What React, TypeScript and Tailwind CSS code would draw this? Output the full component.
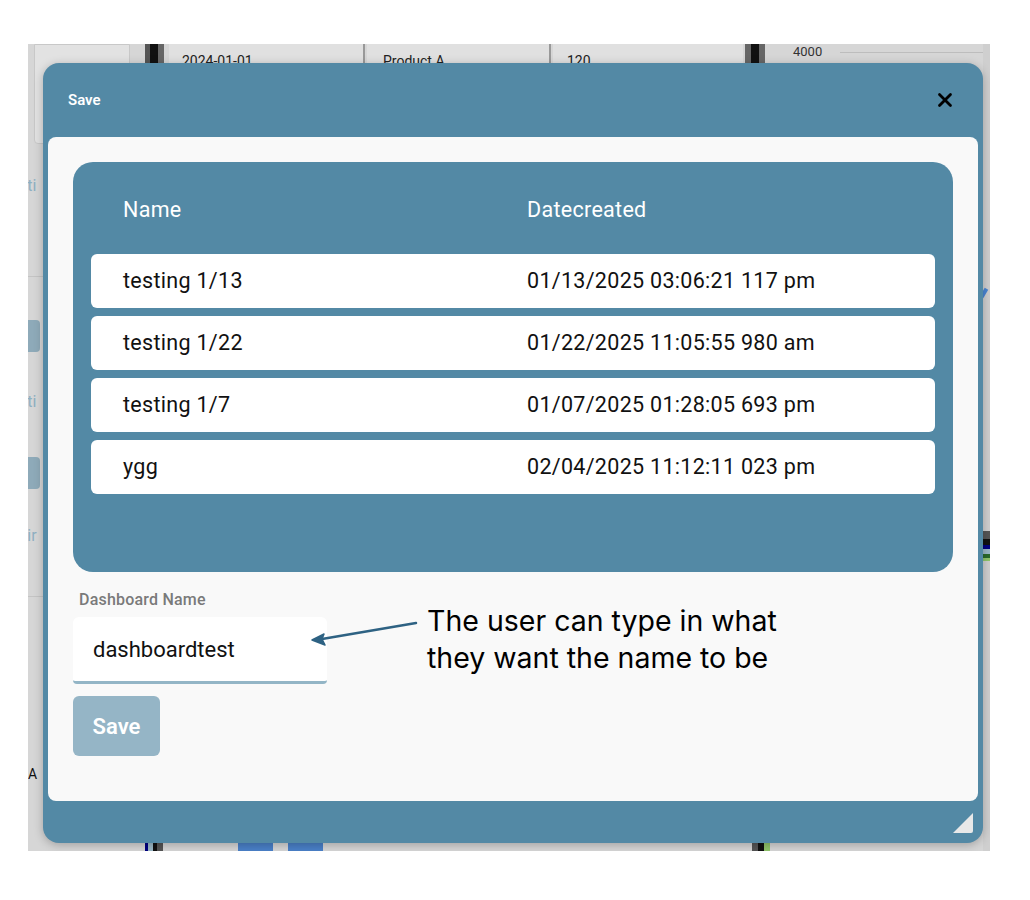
import { X } from 'lucide-react'

const rows = [
  { name: 'testing 1/13', date: '01/13/2025 03:06:21 117 pm' },
  { name: 'testing 1/22', date: '01/22/2025 11:05:55 980 am' },
  { name: 'testing 1/7', date: '01/07/2025 01:28:05 693 pm' },
  { name: 'ygg', date: '02/04/2025 11:12:11 023 pm' },
]

function Backdrop() {
  return (
    <div className="absolute inset-0 bg-[#d6d6d6] text-[14px] text-[#222]">
      {/* top strip of the app behind */}
      <div className="absolute left-[6px] top-0 w-[96px] h-[100px] rounded-b-[4px] border border-[#c8c8c8] bg-[#e2e2e2]" />
      <div className="absolute left-[117px] top-0 h-[20px] w-[24px] flex">
        <div className="w-[5px] bg-[#555]" />
        <div className="w-[8px] bg-[#111]" />
        <div className="w-[6px] bg-[#666]" />
      </div>
      <div className="absolute left-[141px] top-0 w-[196px] h-[20px] bg-[#e0e0e0] border-r-2 border-[#999] pl-[13px] leading-[34px]">2024-01-01</div>
      <div className="absolute left-[339px] top-0 w-[184px] h-[20px] bg-[#e0e0e0] border-r-2 border-[#999] pl-[16px] leading-[34px]">Product A</div>
      <div className="absolute left-[525px] top-0 w-[190px] h-[20px] bg-[#e0e0e0] pl-[14px] leading-[34px]">120</div>
      <div className="absolute left-[717px] top-0 h-[20px] w-[26px] flex">
        <div className="w-[6px] bg-[#666]" />
        <div className="w-[8px] bg-[#111]" />
        <div className="w-[6px] bg-[#666]" />
      </div>
      <div className="absolute left-[765px] top-0 text-[13px] leading-[16px] text-[#333]">4000</div>
      <div className="absolute left-[812px] top-[8px] w-[150px] h-px bg-[#bdbdbd]" />

      {/* left edge */}
      <div className="absolute left-[-6px] top-[130px] text-[16px] text-[#8fb0c2]">tti</div>
      <div className="absolute left-[-6px] top-[276px] w-[18px] h-[32px] rounded-[4px] bg-[#8eaab9]" />
      <div className="absolute left-[-6px] top-[346px] text-[16px] text-[#8fb0c2]">tti</div>
      <div className="absolute left-[-6px] top-[413px] w-[18px] h-[32px] rounded-[4px] bg-[#8eaab9]" />
      <div className="absolute left-[-6px] top-[480px] text-[16px] text-[#8fb0c2]">tir</div>
      <div className="absolute left-0 top-[720px] text-[14px] text-[#111]">A</div>
      <div className="absolute left-0 top-[232px] w-[15px] h-px bg-[#c4c4c4]" />
      <div className="absolute left-0 top-[552px] w-[15px] h-px bg-[#c4c4c4]" />

      {/* right edge */}
      <div className="absolute right-0 top-0 w-[7px] h-full bg-[#cfcfcf]" />
      <div className="absolute right-[4px] top-[244px] w-[4px] h-[10px] bg-[#4a86d4] rotate-[30deg]" />
      <div className="absolute right-0 top-[487px] w-[7px] h-[30px] flex flex-col">
        <div className="h-[8px] bg-[#555]" />
        <div className="h-[6px] bg-[#111]" />
        <div className="h-[4px] bg-[#000080]" />
        <div className="h-[5px] bg-[#9bb8c6]" />
        <div className="h-[4px] bg-[#2a6a2a]" />
        <div className="h-[3px] bg-[#8fc46a]" />
      </div>

      {/* bottom strip */}
      <div className="absolute left-[117px] bottom-0 h-[8px] w-[24px] flex">
        <div className="w-[3px] bg-[#000080]" />
        <div className="w-[5px] bg-[#9bb8c6]" />
        <div className="w-[4px] bg-[#111]" />
        <div className="w-[6px] bg-[#555]" />
      </div>
      <div className="absolute left-[210px] bottom-0 h-[8px] w-[35px] bg-[#4a80c8]" />
      <div className="absolute left-[260px] bottom-0 h-[8px] w-[35px] bg-[#4a80c8]" />
      <div className="absolute left-[724px] bottom-0 h-[8px] w-[24px] flex">
        <div className="w-[6px] bg-[#555]" />
        <div className="w-[6px] bg-[#111]" />
        <div className="w-[6px] bg-[#8fc46a]" />
      </div>
    </div>
  )
}

export default function App() {
  return (
    <div className="w-[1030px] h-[900px] bg-white pt-[44px] pl-[28px]" style={{ fontFamily: 'Roboto, "Liberation Sans", sans-serif' }}>
      <div className="relative w-[962px] h-[807px] overflow-hidden">
        <Backdrop />

        {/* modal */}
        <div className="absolute left-[15px] top-[19px] w-[940px] h-[780px] rounded-[16px] bg-[#5389a5] shadow-[0_2px_10px_rgba(0,0,0,0.25)] flex flex-col">
          <div className="h-[74px] flex items-center justify-between pl-[25px] pr-[27px]">
            <span className="text-white text-[15px] font-semibold">Save</span>
            <X className="w-[22px] h-[22px] text-black" strokeWidth={3} />
          </div>

          <div className="mx-[5px] h-[664px] rounded-[8px] bg-[#f9f9f9] p-[25px]">
            <div className="rounded-[20px] bg-[#5389a5] px-[18px] pb-[78px]">
              <div className="flex pt-[34px] pb-[30px] text-white text-[21.5px] tracking-[0.3px] leading-[28px]">
                <div className="w-[436px] pl-[32px]">Name</div>
                <div>Datecreated</div>
              </div>
              <div className="flex flex-col gap-[8px]">
                {rows.map(r => (
                  <div key={r.name} className="flex items-center h-[54px] rounded-[6px] bg-white text-[21.5px] tracking-[0.3px] text-[#111]">
                    <div className="w-[436px] pl-[32px]">{r.name}</div>
                    <div>{r.date}</div>
                  </div>
                ))}
              </div>
            </div>

            <div className="relative pt-[20px]">
              <label className="block pl-[6px] text-[16px] tracking-[0.2px] leading-[16px] font-medium text-[#7a7a7a]">Dashboard Name</label>
              <div className="mt-[9px] w-[254px] h-[67px] rounded-t-[6px] rounded-b-[4px] bg-white border-b-[3px] border-[#93b5c6] flex items-center pl-[20px] text-[22px] text-[#111]">
                dashboardtest
              </div>
              <button className="mt-[12px] w-[87px] h-[60px] rounded-[6px] bg-[#95b5c6] text-white text-[22px] font-semibold">
                Save
              </button>

              {/* annotation */}
              <svg className="absolute left-[237px] top-[48px]" width="120" height="30" viewBox="0 0 120 30">
                <line x1="106" y1="3" x2="12" y2="19" stroke="#2e6283" strokeWidth="2.5" strokeLinecap="round" />
                <path d="M2 20 L14 14 L12 19 L15 25 Z" fill="#2e6283" stroke="#2e6283" strokeWidth="1.5" strokeLinejoin="round" />
              </svg>
              <div
                className="absolute left-[354px] top-[30px] text-[28.5px] leading-[37px] text-black"
                style={{ fontFamily: 'Inter, "Open Sans", sans-serif' }}
              >
                The user can type in what
                <br />
                they want the name to be
              </div>
            </div>
          </div>

          <div className="flex-1 flex items-end justify-end pr-[10px] pb-[10px]">
            <svg width="20" height="20" viewBox="0 0 20 20">
              <path d="M20 0 L20 18 Q20 20 18 20 L0 20 Z" fill="#e8e8e8" />
            </svg>
          </div>
        </div>
      </div>
    </div>
  )
}
